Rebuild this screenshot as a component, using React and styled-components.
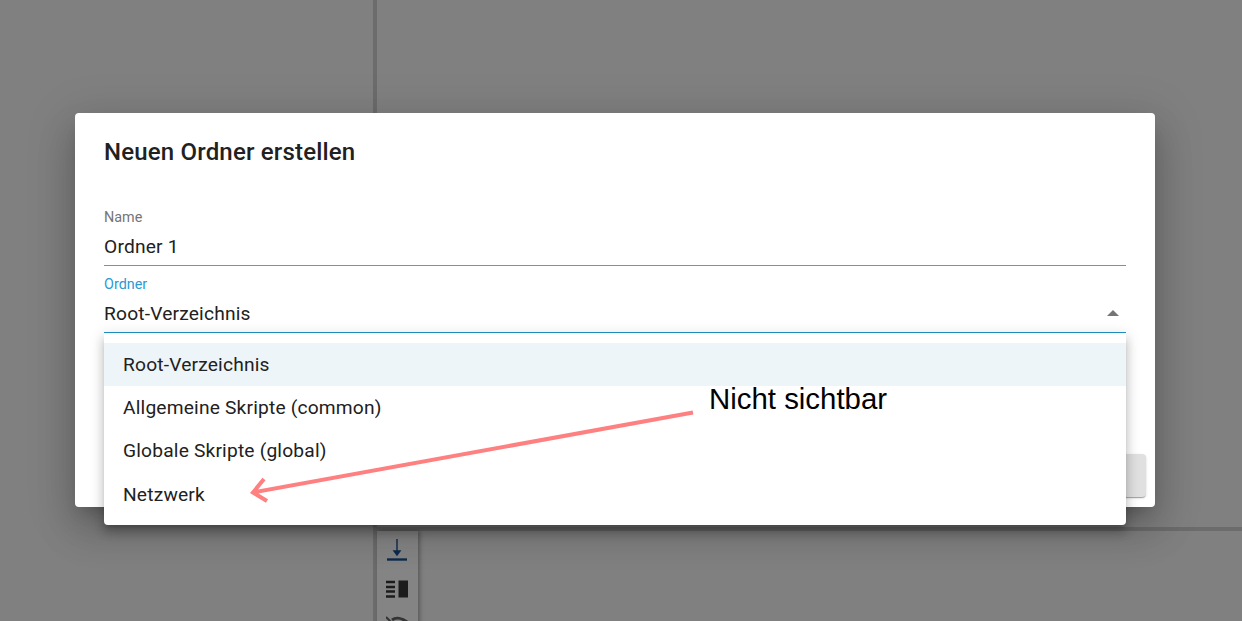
import React from 'react'
import styled, { createGlobalStyle } from 'styled-components'

const GlobalStyle = createGlobalStyle`
  html, body {
    margin: 0;
    height: 100%;
    overflow: hidden;
    background: #808080;
    font-family: Roboto, "Liberation Sans", sans-serif;
  }
`

const Page = styled.div`
  position: relative;
  width: 1242px;
  height: 621px;
  overflow: hidden;
  background: #808080;
`

const Workspace = styled.div`
  display: flex;
  height: 100%;
`

const LeftPane = styled.div`
  width: 373px;
  flex-shrink: 0;
`

const VerticalSplit = styled.div`
  width: 4px;
  flex-shrink: 0;
  background: #6c6c6c;
`

const RightPane = styled.div`
  flex: 1;
  display: flex;
  flex-direction: column;
`

const TopArea = styled.div`
  height: 527px;
  flex-shrink: 0;
`

const HorizontalSplit = styled.div`
  height: 4px;
  flex-shrink: 0;
  background: #6c6c6c;
`

const ToolBar = styled.div`
  width: 41px;
  flex: 1;
  display: flex;
  flex-direction: column;
  align-items: center;
  padding-top: 7px;
  gap: 18px;
  background: #848484;
  box-shadow: 2px 0 4px rgba(0, 0, 0, 0.3);
`

const Overlay = styled.div`
  position: absolute;
  inset: 0;
`

const Dialog = styled.div`
  position: absolute;
  left: 75px;
  top: 113px;
  width: 1080px;
  height: 394px;
  box-sizing: border-box;
  padding: 0 29px;
  background: #fff;
  border-radius: 4px;
  box-shadow: 0 11px 15px -7px rgba(0, 0, 0, 0.2), 0 24px 38px 3px rgba(0, 0, 0, 0.14), 0 9px 46px 8px rgba(0, 0, 0, 0.12);
`

const Title = styled.h2`
  margin: 0;
  padding-top: 23px;
  height: 69px;
  box-sizing: border-box;
  font-size: 24px;
  line-height: 32px;
  font-weight: 500;
  letter-spacing: 0.18px;
  color: #212121;
`

const Form = styled.div`
  display: flex;
  flex-direction: column;
  gap: 11px;
  padding-top: 28px;
`

const Field = styled.div`
  display: flex;
  flex-direction: column;
  gap: 6px;
`

const Label = styled.div`
  font-size: 14.4px;
  line-height: 16px;
  color: ${p => (p.$active ? '#2b9ad4' : '#757575')};
`

const Value = styled.div`
  display: flex;
  align-items: center;
  justify-content: space-between;
  height: 34px;
  box-sizing: border-box;
  padding-bottom: 5px;
  font-size: 19.2px;
  letter-spacing: 0.18px;
  color: #212121;
  border-bottom: 1px solid ${p => (p.$active ? '#1f93c9' : '#8c8c8c')};
`

const Caret = styled.span`
  width: 0;
  height: 0;
  margin-right: 7px;
  border-left: 6px solid transparent;
  border-right: 6px solid transparent;
  border-bottom: 6px solid #757575;
`

const ActionButton = styled.div`
  position: absolute;
  right: 9px;
  bottom: 10px;
  width: 80px;
  height: 43px;
  background: #e0e0e0;
  border-radius: 4px;
  box-shadow: 0 2px 1px -1px rgba(0, 0, 0, 0.2), 0 1px 1px 0 rgba(0, 0, 0, 0.14), 0 1px 3px 0 rgba(0, 0, 0, 0.12);
`

const Menu = styled.ul`
  position: absolute;
  left: 104px;
  top: 333px;
  width: 1022px;
  height: 192px;
  box-sizing: border-box;
  margin: 0;
  padding: 10px 0 0;
  list-style: none;
  background: #fff;
  border-radius: 0 0 4px 4px;
  box-shadow: 0 5px 5px -3px rgba(0, 0, 0, 0.2), 0 8px 10px 1px rgba(0, 0, 0, 0.14), 0 3px 14px 2px rgba(0, 0, 0, 0.12);
`

const MenuItem = styled.li`
  height: 43.2px;
  line-height: 43.2px;
  padding-left: 19px;
  font-size: 19.2px;
  letter-spacing: 0.18px;
  color: #212121;
  background: ${p => (p.$selected ? '#eef5f9' : 'transparent')};
`

const Note = styled.div`
  position: absolute;
  left: 709px;
  top: 382px;
  font-family: "Liberation Sans", Arial, sans-serif;
  font-size: 29.4px;
  line-height: 34px;
  color: #000;
`

const Arrow = styled.svg`
  position: absolute;
  left: 240px;
  top: 400px;
`

const items = ['Root-Verzeichnis', 'Allgemeine Skripte (common)', 'Globale Skripte (global)', 'Netzwerk']

const App = () => {
  return (
    <Page>
      <GlobalStyle />
      <Workspace>
        <LeftPane />
        <VerticalSplit />
        <RightPane>
          <TopArea />
          <HorizontalSplit />
          <ToolBar>
            <svg width="24" height="24" viewBox="0 0 24 24">
              <path d="M11 1v13M8 13h6l-3 4z" stroke="#0d2a4d" strokeWidth="1.4" fill="#0d2a4d" />
              <path d="M1 21.5h20" stroke="#0d2a4d" strokeWidth="2.4" />
            </svg>
            <svg width="24" height="18" viewBox="0 0 24 18">
              <path d="M0 2h9M0 7h9M0 11.5h9M0 16.5h9" stroke="#1c1c1c" strokeWidth="2.4" />
              <rect x="12.5" y="0.5" width="9.5" height="17" fill="#1c1c1c" />
            </svg>
            <svg width="24" height="20" viewBox="0 0 24 20">
              <path d="M0 1l12 12" stroke="#333" strokeWidth="2" />
              <path d="M6 4c4-3 10-2 15 2" stroke="#333" strokeWidth="3" fill="none" />
            </svg>
          </ToolBar>
        </RightPane>
      </Workspace>
      <Overlay>
        <Dialog>
          <Title>Neuen Ordner erstellen</Title>
          <Form>
            <Field>
              <Label>Name</Label>
              <Value>Ordner 1</Value>
            </Field>
            <Field>
              <Label $active>Ordner</Label>
              <Value $active>
                Root-Verzeichnis
                <Caret />
              </Value>
            </Field>
          </Form>
          <ActionButton />
        </Dialog>
        <Menu>
          {items.map((item, i) => (
            <MenuItem key={item} $selected={i === 0}>{item}</MenuItem>
          ))}
        </Menu>
        <Arrow width="470" height="110" viewBox="0 0 470 110">
          <path d="M453 12.5L13 92.5M24 79L13 92.5L27 101" stroke="#ff8080" strokeWidth="4" fill="none" />
        </Arrow>
        <Note>Nicht sichtbar</Note>
      </Overlay>
    </Page>
  )
}

export default App
